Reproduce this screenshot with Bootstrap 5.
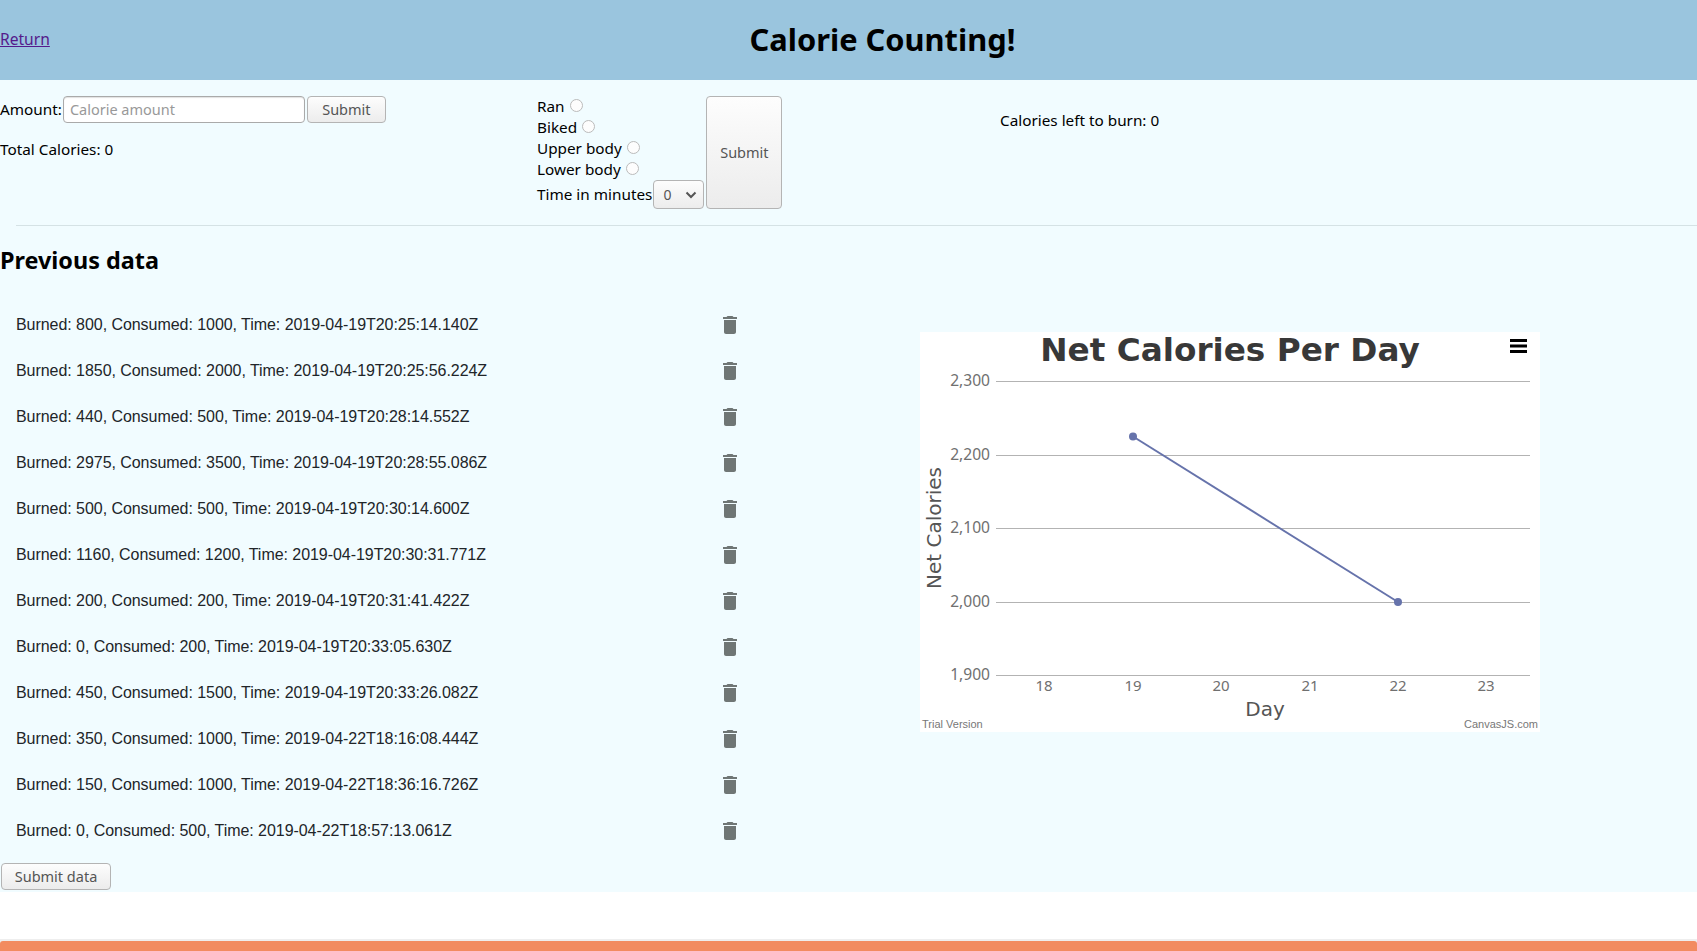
<!DOCTYPE html>
<html lang="en">
  <head>
    <meta charset="UTF-8" />
    <meta name="viewport" content="width=device-width, initial-scale=1.0" />
    <title>Calorie Counting!</title>
    <link href="https://cdn.jsdelivr.net/npm/bootstrap@5.3.3/dist/css/bootstrap.min.css" rel="stylesheet" />
    <style>
      body {
        font-family: "Noto Sans", sans-serif;
        font-size: 15.3px;
        color: #000;
        background: #fff;
      }
      .top-bar {
        height: 80px;
        background: #9ac5de;
      }
      .top-bar a {
        color: #551a8b;
        font-size: 15.6px;
        padding-bottom: 1px;
      }
      .top-bar h1 {
        font-size: 30.8px;
        font-weight: 700;
        margin: 0;
        padding: 0 0 2px 18px;
      }
      .page-body {
        background: #f1fcff;
        height: 812px;
      }
      .form-band {
        height: 145px;
        padding-top: 16px;
      }
      .amount-col {
        width: 537px;
      }
      .radio-col {
        width: 463px;
      }
      .fake-btn {
        background: linear-gradient(#fdfdfd, #ececec);
        border: 1px solid #b4b4b4;
        border-radius: 4px;
        color: #555;
        font-size: 14.5px;
        padding: 0;
        line-height: 1;
      }
      .amount-input {
        width: 242px;
        height: 27px;
        border: 1px solid #aaa;
        border-radius: 4px;
        background: #fff;
        padding: 0 6px 2px;
        font-size: 14.5px;
        margin-left: 1px;
        box-shadow: inset 0 1px 1px rgba(0, 0, 0, 0.12);
      }
      .amount-input::placeholder {
        color: #999;
      }
      .amount-row {
        height: 27px;
      }
      .amount-row .fake-btn {
        width: 79px;
        height: 27px;
        margin-left: 2px;
      }
      .total-line {
        margin-top: 14px;
        line-height: 24px;
      }
      .radio-line {
        height: 21px;
      }
      .radio-dot {
        appearance: none;
        width: 13px;
        height: 13px;
        border: 1px solid #bbb;
        border-radius: 50%;
        background: #fdfdfd;
        margin: 0 0 3px 5px;
      }
      .time-line {
        height: 29px;
      }
      .time-select {
        appearance: none;
        width: 51px;
        height: 29px;
        border: 1px solid #b4b4b4;
        border-radius: 4px;
        background: url("data:image/svg+xml,%3Csvg xmlns='http://www.w3.org/2000/svg' width='12' height='8'%3E%3Cpath d='M1.5 1.5 6 6l4.5-4.5' fill='none' stroke='%23555' stroke-width='2'/%3E%3C/svg%3E") no-repeat right 6px center, linear-gradient(#fdfdfd, #ececec);
        color: #555;
        font-size: 14px;
        padding: 0 0 1px 9px;
        margin-left: 1px;
      }
      .big-submit {
        width: 76px;
        height: 113px;
        margin-left: 2px;
      }
      .calories-left {
        margin-top: 12px;
        line-height: 24px;
      }
      .page-rule {
        margin: 0 0 0 16px;
        border-color: #d5e2e5;
        opacity: 1;
      }
      .prev-title {
        font-size: 23.4px;
        font-weight: 700;
        height: 76px;
        margin: 0;
        padding-top: 17px;
        line-height: 34px;
      }
      .data-col {
        width: 920px;
      }
      .data-list .list-group-item {
        background: transparent;
        border: 0;
        height: 46px;
        width: 742px;
        padding: 0 0 0 16px;
        font-family: "Liberation Sans", sans-serif;
        font-size: 16px;
        letter-spacing: -0.05px;
        color: #212529;
      }
      .data-list svg {
        fill: #6f7675;
      }
      .submit-data {
        width: 110px;
        height: 27px;
        margin: 9px 0 0 1px;
        display: block;
      }
      .chart-box {
        width: 620px;
        height: 400px;
        margin-top: 106px;
        background: #fff;
      }
      .chart-box text {
        font-family: "DejaVu Sans", sans-serif;
      }
      .chart-box .tick-label {
        font-family: "Noto Sans", sans-serif;
        font-size: 15px;
        fill: #707070;
      }
      .chart-box .value-label {
        font-size: 15.6px;
      }
      .chart-box .chart-credit {
        font-family: "Liberation Sans", sans-serif;
        font-size: 11px;
        fill: #777;
      }
      .bottom-bar {
        margin-top: 47px;
        height: 12px;
        padding-top: 2px;
        background: #eee;
      }
      .bottom-fill {
        height: 10px;
        background: #f28b60;
        border-top-left-radius: 3px;
        border-top-right-radius: 3px;
      }
    </style>
  </head>
  <body>
    <header class="top-bar d-flex align-items-center">
      <a href="#">Return</a>
      <h1 class="flex-grow-1 text-center">Calorie Counting!</h1>
    </header>

    <main class="page-body">
      <div class="form-band d-flex">
        <div class="amount-col">
          <form class="amount-row d-flex align-items-center">
            <label for="amount">Amount:</label>
            <input id="amount" class="amount-input" type="text" placeholder="Calorie amount" />
            <button type="button" class="fake-btn">Submit</button>
          </form>
          <div class="total-line">Total Calories: 0</div>
        </div>

        <div class="radio-col d-flex">
          <form>
            <label class="radio-line d-flex align-items-center">Ran<input class="radio-dot" type="radio" name="kind" /></label>
            <label class="radio-line d-flex align-items-center">Biked<input class="radio-dot" type="radio" name="kind" /></label>
            <label class="radio-line d-flex align-items-center">Upper body<input class="radio-dot" type="radio" name="kind" /></label>
            <label class="radio-line d-flex align-items-center">Lower body<input class="radio-dot" type="radio" name="kind" /></label>
            <div class="time-line d-flex align-items-center">
              <label for="minutes">Time in minutes</label>
              <select id="minutes" class="time-select"><option>0</option></select>
            </div>
          </form>
          <button type="button" class="fake-btn big-submit">Submit</button>
        </div>

        <div class="calories-left">Calories left to burn: 0</div>
      </div>

      <hr class="page-rule" />

      <div class="d-flex">
        <div class="data-col">
          <h2 class="prev-title">Previous data</h2>
          <ul class="list-group data-list" id="dataList"></ul>
          <button type="button" class="fake-btn submit-data">Submit data</button>
        </div>

        <svg class="chart-box d-block" viewBox="0 0 620 400" xmlns="http://www.w3.org/2000/svg">
          <text x="310" y="29" text-anchor="middle" font-size="32.7" font-weight="700" fill="#383838">Net Calories Per Day</text>
          <g fill="#000">
            <rect x="590" y="7" width="17" height="3" />
            <rect x="590" y="12.5" width="17" height="3" />
            <rect x="590" y="18" width="17" height="3" />
          </g>
          <g stroke="#b3b3b3" stroke-width="1">
            <line x1="76" x2="610" y1="49.5" y2="49.5" />
            <line x1="76" x2="610" y1="123.5" y2="123.5" />
            <line x1="76" x2="610" y1="196.5" y2="196.5" />
            <line x1="76" x2="610" y1="270.5" y2="270.5" />
            <line x1="76" x2="610" y1="343.5" y2="343.5" />
          </g>
          <g text-anchor="end">
            <text class="tick-label value-label" x="70" y="54">2,300</text>
            <text class="tick-label value-label" x="70" y="128">2,200</text>
            <text class="tick-label value-label" x="70" y="201">2,100</text>
            <text class="tick-label value-label" x="70" y="275">2,000</text>
            <text class="tick-label value-label" x="70" y="348">1,900</text>
          </g>
          <g text-anchor="middle">
            <text class="tick-label" x="124" y="359">18</text>
            <text class="tick-label" x="213" y="359">19</text>
            <text class="tick-label" x="301" y="359">20</text>
            <text class="tick-label" x="390" y="359">21</text>
            <text class="tick-label" x="478" y="359">22</text>
            <text class="tick-label" x="566" y="359">23</text>
          </g>
          <line x1="213" y1="104.5" x2="478" y2="270" stroke="#6673ab" stroke-width="2" />
          <circle cx="213" cy="104.5" r="4" fill="#6673ab" />
          <circle cx="478" cy="270" r="4" fill="#6673ab" />
          <text x="345" y="384" text-anchor="middle" font-size="20" fill="#555">Day</text>
          <text transform="translate(21 196) rotate(-90)" text-anchor="middle" font-size="20" fill="#555">Net Calories</text>
          <text class="chart-credit" x="2" y="396">Trial Version</text>
          <text class="chart-credit" x="618" y="396" text-anchor="end">CanvasJS.com</text>
        </svg>
      </div>
    </main>

    <div class="bottom-bar"><div class="bottom-fill"></div></div>

    <script src="https://cdn.jsdelivr.net/npm/bootstrap@5.3.3/dist/js/bootstrap.bundle.min.js"></script>
    <script>
      const rows = [
        [800, 1000, "2019-04-19T20:25:14.140Z"],
        [1850, 2000, "2019-04-19T20:25:56.224Z"],
        [440, 500, "2019-04-19T20:28:14.552Z"],
        [2975, 3500, "2019-04-19T20:28:55.086Z"],
        [500, 500, "2019-04-19T20:30:14.600Z"],
        [1160, 1200, "2019-04-19T20:30:31.771Z"],
        [200, 200, "2019-04-19T20:31:41.422Z"],
        [0, 200, "2019-04-19T20:33:05.630Z"],
        [450, 1500, "2019-04-19T20:33:26.082Z"],
        [350, 1000, "2019-04-22T18:16:08.444Z"],
        [150, 1000, "2019-04-22T18:36:16.726Z"],
        [0, 500, "2019-04-22T18:57:13.061Z"],
      ];
      const trash =
        '<svg width="24" height="24" viewBox="0 0 24 24"><path d="M6 19c0 1.1.9 2 2 2h8c1.1 0 2-.9 2-2V7H6v12zM19 4h-3.5l-1-1h-5l-1 1H5v2h14V4z"/></svg>';
      document.getElementById("dataList").innerHTML = rows
        .map(
          (r) =>
            `<li class="list-group-item d-flex align-items-center justify-content-between"><span>Burned: ${r[0]}, Consumed: ${r[1]}, Time: ${r[2]}</span>${trash}</li>`
        )
        .join("");
    </script>
  </body>
</html>
